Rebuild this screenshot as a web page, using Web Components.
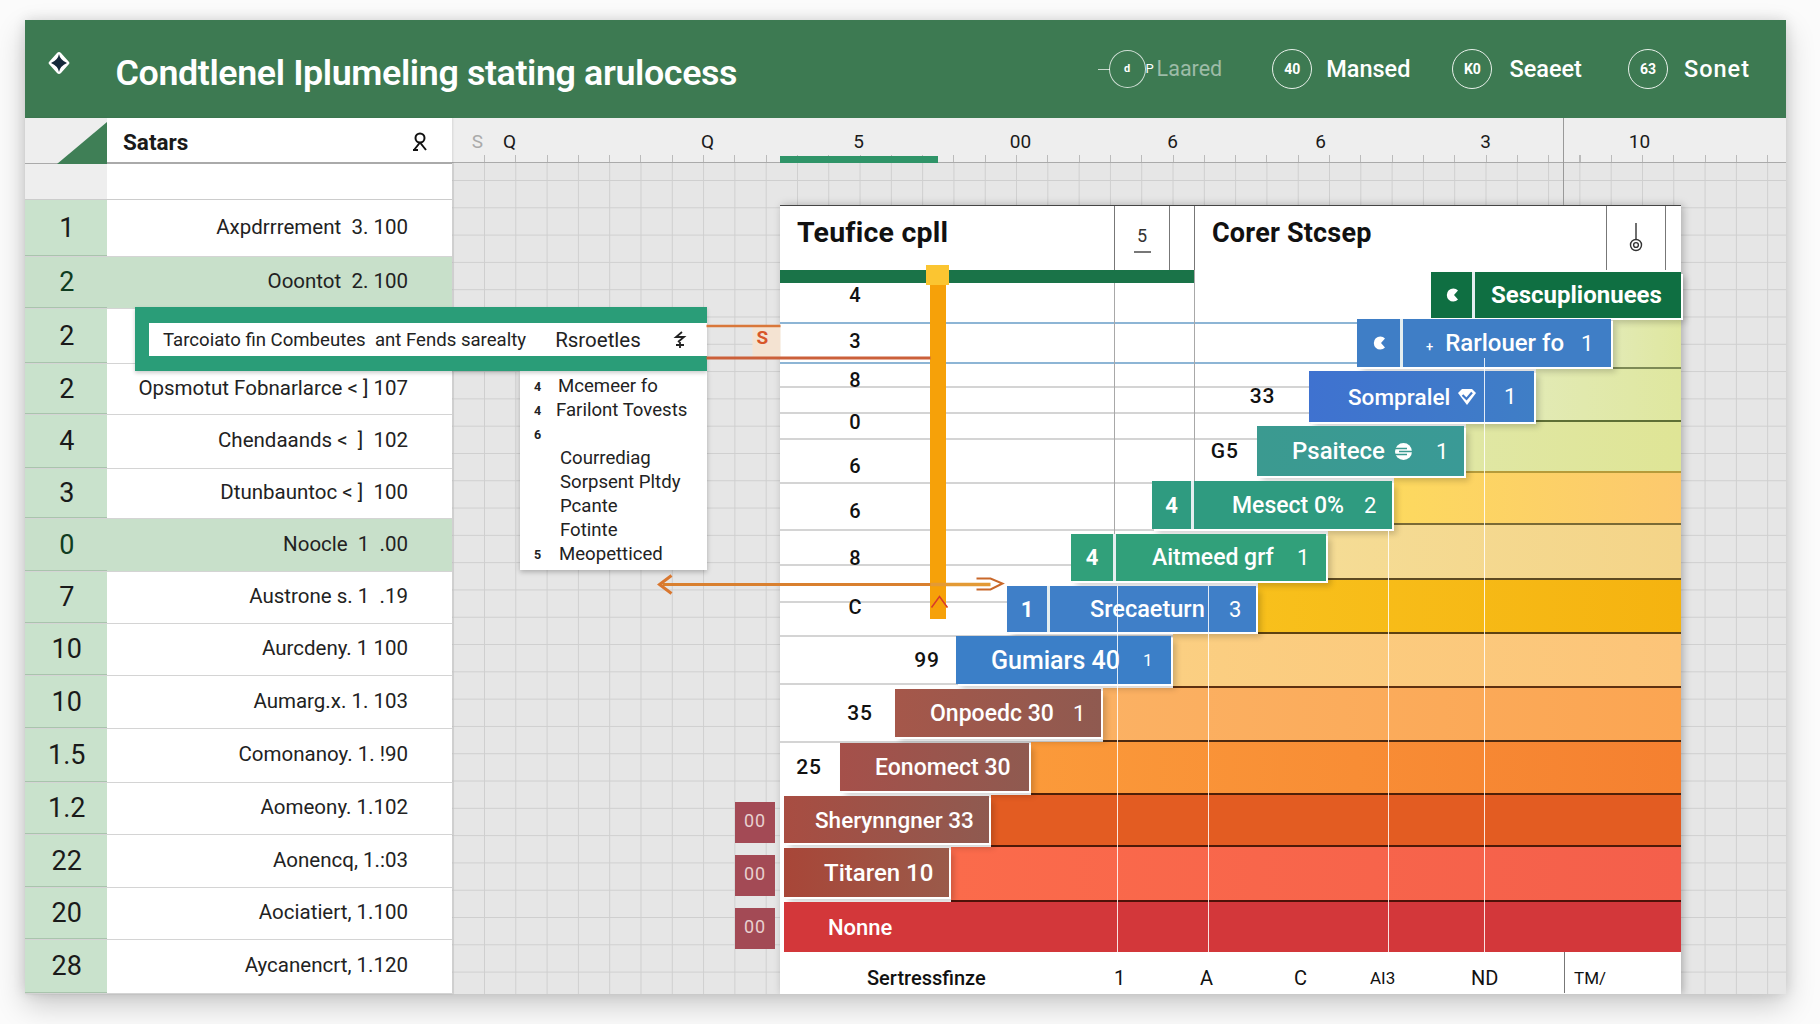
<!DOCTYPE html>
<html>
<head>
<meta charset="utf-8">
<style>
  html, body { margin: 0; height: 100%; background: #fbfbfb; }
  body { font-family: Roboto, "Liberation Sans", sans-serif; color: #1a1a1a; overflow: hidden; }
</style>
</head>
<body>
<app-window>
  <app-header slot="header"></app-header>
  <name-table slot="table"></name-table>
  <chart-area slot="chart"></chart-area>
  <filter-popup slot="over"></filter-popup>
</app-window>

<script>
(() => {
  const PANEL_X = 780;

  const ROWS = [
    [57, '1', 'Axpdrrrement&nbsp; 3. 100'],
    [52, '2', 'Ooontot&nbsp; 2. 100', true],
    [55, '2', ''],
    [51, '2', 'Opsmotut Fobnarlarce &lt; ] 107'],
    [54, '4', 'Chendaands &lt;&nbsp; ]&nbsp; 102'],
    [50, '3', 'Dtunbauntoc &lt; ]&nbsp; 100'],
    [53, '0', 'Noocle&nbsp; 1&nbsp; .00', true],
    [52, '7', 'Austrone s. 1&nbsp; .19'],
    [52, '10', 'Aurcdeny. 1 100'],
    [53, '10', 'Aumarg.x. 1. 103'],
    [54, '1.5', 'Comonanoy. 1. !90'],
    [52, '1.2', 'Aomeony. 1.102'],
    [53, '22', 'Aonencq, 1.:03'],
    [52, '20', 'Aociatiert, 1.100'],
    [54, '28', 'Aycanencrt, 1.120'],
  ];

  const notch = (c) => `<svg width="14" height="14" viewBox="0 0 14 14"><path d="M13 2.5 A6.5 6.5 0 1 0 13 11.5 L9 7 Z" fill="#fff" stroke="${c}" stroke-width="0"/></svg>`;
  const SHIELD = `<svg width="20" height="20" viewBox="0 0 20 20"><path d="M1 6 L5 2 H15 L19 6 L10 18 Z" fill="#fff"/><path d="M5.5 8 L9.5 12 L15 5.5" fill="none" stroke="#3f78c8" stroke-width="2.2"/></svg>`;
  const COIN = `<svg width="19" height="19" viewBox="0 0 19 19"><circle cx="9.5" cy="9.5" r="8.5" fill="#fff"/><path d="M1 6.5 H13 M5 9.5 H18 M1 12.5 H13" stroke="#3a9a90" stroke-width="1.4"/></svg>`;

  // y0/h: band box, top/bh: bar box, all in page pixels
  const BANDS = [
    { y0: 272, h: 45.5, x0: 1431, x1: 1681, top: 272, bh: 45.5, split: 1475, cell: notch('#0f6f42'), bg: '#0f6f42', textX: 1491, text: 'Sescuplionuees', weight: 700, size: 24 },
    { y0: 317.5, h: 51.5, x0: 1357, x1: 1611, top: 319, bh: 48, split: 1403, cell: notch('#3f7ec6'), bg: '#3f7ec6', textX: 1426, text: '<small>+</small>&nbsp; Rarlouer fo', numX: 1581, num: '1', size: 24, fill: 'linear-gradient(90deg,#e2eab4,#dfe79f)', rule: '#7d8a55' },
    { y0: 369, h: 53, x0: 1308.5, x1: 1534, top: 371, bh: 51, bg: 'linear-gradient(90deg,#3f72d0,#3f7ec6)', textX: 1348, text: 'Somprаlel', size: 22.5, icon: SHIELD, iconGap: 7, numX: 1504, num: '1', label: '33', labelGap: 33, fill: 'linear-gradient(90deg,#e2eab4,#dfe79f)', rule: '#5e6f35' },
    { y0: 422, h: 51, x0: 1257, x1: 1464, top: 426, bh: 50, bg: 'linear-gradient(90deg,#3b9a90,#3a9a96)', textX: 1292, text: 'Psaitece', size: 24, icon: COIN, iconGap: 9, numX: 1436, num: '1', label: 'G5', labelGap: 18, fill: 'linear-gradient(90deg,#e0e7a4,#dfe596)', rule: '#b59b3a' },
    { y0: 473, h: 52, x0: 1152, x1: 1392, top: 481, bh: 48, split: 1194, cell: '4', bg: '#2f9b80', textX: 1232, text: 'Mesect 0%', size: 23, numX: 1364, num: '2', fill: 'linear-gradient(90deg,#fdd95f,#fcc96e)', rule: '#7a6a35' },
    { y0: 525, h: 55, x0: 1071, x1: 1326, top: 534, bh: 47, split: 1116, cell: '4', bg: '#31a07a', textX: 1152, text: 'Aitmeed grf', size: 23, numX: 1297, num: '1', fill: 'linear-gradient(90deg,#f5dc95,#f4d488)', rule: '#5e4a20' },
    { y0: 580, h: 54, x0: 1007, x1: 1256, top: 586, bh: 46, split: 1050, cell: '1', bg: '#3f7fc8', textX: 1090, text: 'Srecaeturn', size: 23.5, numX: 1229, num: '3', fill: 'linear-gradient(90deg,#f8c01c,#f5b310)', rule: '#5e4210' },
    { y0: 634, h: 54, x0: 956, x1: 1171, top: 636, bh: 48, bg: '#3b7fc8', textX: 991, text: 'Gumiars 40', size: 25, numX: 1143, num: '1', label: '99', labelGap: 16, fill: 'linear-gradient(90deg,#fbcf82,#fcc478)', rule: '#5e3010', small: true },
    { y0: 688, h: 54, x0: 895, x1: 1101, top: 689, bh: 48, bg: 'linear-gradient(90deg,#a5574a,#8f5a50)', textX: 930, text: 'Onpoedc 30', size: 23, numX: 1073, num: '1', label: '35', labelGap: 22, fill: 'linear-gradient(90deg,#fbb163,#fba552)', rule: '#4e2a10' },
    { y0: 742, h: 53, x0: 840, x1: 1029, top: 743, bh: 48, bg: 'linear-gradient(90deg,#a5504a,#8f5a50)', textX: 875, text: 'Eonomect 30', size: 23, label: '25', labelGap: 18, fill: 'linear-gradient(90deg,#fb9a3a,#f58030)', rule: '#4e2008' },
    { y0: 795, h: 52, x0: 784, x1: 989, top: 796, bh: 47, bg: 'linear-gradient(90deg,#a84d42,#8f5a50)', textX: 815, text: 'Sherynngner 33', size: 22.5, fill: '#e35c22', rule: '#4e1a08' },
    { y0: 847, h: 55, x0: 784, x1: 949, top: 848, bh: 49, bg: 'linear-gradient(90deg,#a84638,#9a5a4a)', textX: 824, text: 'Titaren 10', size: 24, fill: 'linear-gradient(90deg,#fb6b4b,#f45f4b)', rule: '#4e1208' },
    { y0: 902, h: 50, x0: 784, x1: 1681, top: 902, bh: 50, bg: '#d3373a', textX: 828, text: 'Nonne', size: 22, flat: true },
  ];

  // horizontal rules behind the bars: [y, colour, thickness]
  const RULES = [
    [322, '#8db5d5', 2], [362, '#8db5d5', 2], [386, '#d4d4d4', 1.5], [412, '#d4d4d4', 1.5], [438, '#d4d4d4', 1.5],
    [482, '#d4d4d4', 1.5], [529, '#d4d4d4', 1.5], [564, '#d4d4d4', 1.5], [601, '#d4d4d4', 1.5], [635, '#d4d4d4', 1.5],
    [683, '#d4d4d4', 1.5], [741, '#d4d4d4', 1.5],
  ];
  const NUMBERS = [[46, '4'], [46, '3'], [32, '8'], [52, '0'], [36, '6'], [54, '6'], [40, '8'], [58, 'C']];
  // white lines over the bars: [x, y from, y to]
  const WHITE_LINES = [[1117, 586, 952], [1208, 586, 952], [1388, 529, 958], [1484, 358, 952]];

  class AppWindow extends HTMLElement {
    constructor() {
      super();
      this.attachShadow({ mode: 'open' });
      this.shadowRoot.innerHTML = `
        <style>
          :host {
            display: block; position: relative; box-sizing: border-box;
            width: 1761.5px; height: 973.5px; margin: 19.5px 0 0 24.5px;
            background: #e6e6e6; box-shadow: 0 12px 28px rgba(0,0,0,.2), 0 0 12px rgba(0,0,0,.12);
          }
          .main { display: grid; grid-template-columns: 427.5px 1fr; height: 875.5px; }
          svg { position: absolute; inset: 0; width: 100%; height: 100%; pointer-events: none; z-index: 10; }
          text { font: 700 19px Roboto, sans-serif; fill: #d8562a; }
        </style>
        <slot name="header"></slot>
        <div class="main">
          <slot name="table"></slot>
          <slot name="chart"></slot>
        </div>
        <slot name="over"></slot>
        <svg viewBox="24.5 19.5 1761.5 973.5">
          <rect x="752" y="325" width="28" height="32" fill="#f4e3d2"/>
          <path d="M706 325.5 H780" stroke="#d9773a" stroke-width="2.5"/>
          <path d="M706 357.5 H930" stroke="#cb603a" stroke-width="3"/>
          <text x="756" y="343">S</text>
          <path d="M662 584 H930" stroke="#d9802f" stroke-width="3"/>
          <path d="M930 584 H990" stroke="#e39a35" stroke-width="3.5"/>
          <path d="M671 575 L659 584 L671 593" fill="none" stroke="#d9772f" stroke-width="3"/>
          <path d="M976 578 H990 L1002 583 L990 589 H976" fill="none" stroke="#c9682a" stroke-width="2"/>
          <path d="M931 607 L939 596 L947 607" fill="#f6a009" stroke="#d83a2a" stroke-width="1.5"/>
        </svg>
      `;
    }
  }

  class AppHeader extends HTMLElement {
    constructor() {
      super();
      this.attachShadow({ mode: 'open' });
      this.shadowRoot.innerHTML = `
        <style>
          :host {
            display: flex; align-items: center; box-sizing: border-box; height: 98px;
            padding: 0 36px 0 22px; background: #3d7a52; color: #fff;
          }
          .logo { flex: none; margin-top: -12px; }
          h1 { margin: 0 0 0 45px; font: 600 35.8px Roboto, sans-serif; letter-spacing: -.38px; white-space: nowrap; position: relative; top: 4px; }
          .items { display: flex; align-items: center; margin-left: auto; }
          .item { display: flex; align-items: center; font: 500 23.5px Roboto, sans-serif; position: relative; }
          .ring {
            display: grid; place-items: center; box-sizing: border-box; width: 40px; height: 40px;
            border: 1.5px solid #e8f0ea; border-radius: 50%; font: 700 14px Roboto, sans-serif;
          }
          .dim { font-weight: 400; font-size: 21.5px; color: rgba(255,255,255,.5); }
          .dim .ring { width: 37px; height: 38px; border-color: rgba(255,255,255,.75); color: #fff; font-size: 11px; }
          .dim::before { content: ''; position: absolute; left: -11px; top: 50%; width: 12px; height: 1.5px; background: rgba(255,255,255,.7); }
          .pin { width: 11px; color: #fff; font-size: 13px; }
        </style>
        <svg class="logo" width="24" height="24" viewBox="0 0 24 24">
          <path d="M12 1 Q13 1 14 2 L22 11 Q23 12 22 13 L14 22 Q13 23 12 23 Q11 23 10 22 L2 13 Q1 12 2 11 L10 2 Q11 1 12 1 Z" fill="#fff"/>
          <path d="M12 3 Q13 9 20 12 Q13 15 12 21 Q11 15 4 12 Q11 9 12 3 Z" fill="#15283a"/>
        </svg>
        <h1>Condtlenel Iplumeling stating arulocess</h1>
        <div class="items">
          <div class="item dim"><span class="ring">d</span><span class="pin">P</span>Laared</div>
          <div class="item" style="margin-left:50px"><span class="ring" style="margin-right:14px">40</span>Mansed</div>
          <div class="item" style="margin-left:42px"><span class="ring" style="margin-right:17px">K0</span>Seaeet</div>
          <div class="item" style="margin-left:46px"><span class="ring" style="margin-right:16px">63</span><span style="letter-spacing:1px">Sonet</span></div>
        </div>
      `;
    }
  }

  class NameTable extends HTMLElement {
    constructor() {
      super();
      this.attachShadow({ mode: 'open' });
      const rows = ROWS.map(([h, num, name, hl]) => `
        <div class="row ${hl ? 'hl' : ''}" style="height:${h}px">
          <span class="num">${num}</span>
          <span class="name">${name}</span>
        </div>`).join('');
      this.shadowRoot.innerHTML = `
        <style>
          :host { display: block; background: #fff; box-shadow: 1px 0 2px rgba(0,0,0,.1); position: relative; z-index: 1; }
          .head { display: grid; grid-template-columns: 82.5px 1fr; height: 46px; background: #eee; }
          .corner { position: relative; border-bottom: 1.5px solid #aaa; box-sizing: border-box; }
          .corner::after { content: ''; position: absolute; right: 0; bottom: -1.5px; width: 50px; height: 42px; background: #3f7f56; clip-path: polygon(100% 0, 100% 100%, 0 100%); }
          .title {
            display: flex; align-items: center; justify-content: space-between; box-sizing: border-box;
            padding: 4px 22px 0 16px; background: #fff; border-bottom: 2px solid #aaa; font: 700 22.5px Roboto, sans-serif;
          }
          .blank { display: grid; grid-template-columns: 82.5px 1fr; height: 36px; }
          .blank i { background: #eee; border-bottom: 1.5px solid #ccc; }
          .blank b { border-bottom: 1.5px solid #ccc; }
          .row { display: grid; grid-template-columns: 82.5px 1fr; align-items: center; box-sizing: border-box; border-bottom: 1.5px solid #d4d4d4; }
          .num { display: grid; place-items: center; height: 100%; background: #c9e2cc; font-size: 27px; border-bottom: 1px solid #a9c4ad; margin-bottom: -1px; padding-left: 2px; box-sizing: border-box; }
          .name { text-align: right; padding-right: 44px; font-size: 20.5px; white-space: nowrap; color: #222; position: relative; top: -1px; }
          .hl { background: #c8e0ca; color: #0f3d20; }
          .hl .num { background: #c8e0ca; }
        </style>
        <div class="head">
          <div class="corner"></div>
          <div class="title">Satars
            <svg width="20" height="20" viewBox="0 0 20 20" fill="none" stroke="#111" stroke-width="2"><circle cx="10" cy="6" r="4.5"/><path d="M10 10.5 L4 18 M10 10.5 L16 18 M3 18 H8"/></svg>
          </div>
        </div>
        <div class="blank"><i></i><b></b></div>
        ${rows}
      `;
    }
  }

  class ChartArea extends HTMLElement {
    constructor() {
      super();
      this.attachShadow({ mode: 'open' });
      const labels = [['S', 10.5, '#aaa'], ['Q', 2], ['Q', 168], ['5', 121], ['00', 132], ['6', 122], ['6', 118], ['3', 135], ['10', 124]];
      this.shadowRoot.innerHTML = `
        <style>
          :host { display: flex; flex-direction: column; position: relative; overflow: hidden; min-height: 0; }
          .ruler {
            display: flex; align-items: center; box-sizing: border-box; height: 45px; flex: none; padding-top: 4px; position: relative;
            background:
              repeating-linear-gradient(90deg, #bbb 0 1px, transparent 1px 31.3px) 32px bottom / 100% 7px no-repeat,
              #eee;
            border-bottom: 1.5px solid #aaa; font-size: 19px;
          }
          .ruler span { flex: none; width: 30px; text-align: center; }
          .tab { position: absolute; left: 328px; bottom: -1.5px; width: 158px; height: 7px; background: #2f9468; }
          .vline { position: absolute; left: 1111px; top: 0; height: 87px; width: 1px; background: #999; z-index: 1; }
          .grid {
            flex: 1; min-height: 0;
            background:
              linear-gradient(90deg, #cfcfcf 1.2px, transparent 1.2px) 32px 17px / 31.3px 27.3px,
              linear-gradient(#cfcfcf 1.2px, transparent 1.2px) 32px 17px / 31.3px 27.3px,
              #e6e6e6;
            padding: 42px 0 0 328px;
          }
          .chips { position: absolute; left: 283px; top: 684px; display: flex; flex-direction: column; gap: 12px; }
          .chip { display: grid; place-items: center; width: 40px; height: 41px; background: #a34a55; color: #e8d0d0; font-size: 18px; letter-spacing: 1px; padding-bottom: 4px; box-sizing: border-box; }
        </style>
        <div class="ruler">
          ${labels.map(([t, m, c]) => `<span style="margin-left:${m}px${c ? ';color:' + c : ''}">${t}</span>`).join('')}
          <div class="tab"></div>
        </div>
        <div class="vline"></div>
        <div class="grid"><chart-panel></chart-panel></div>
        <div class="chips"><div class="chip">00</div><div class="chip">00</div><div class="chip">00</div></div>
      `;
    }
  }

  class ChartPanel extends HTMLElement {
    constructor() {
      super();
      this.attachShadow({ mode: 'open' });
      const bands = BANDS.map((b, i) => `<step-band data-i="${i}"></step-band>`).join('');
      this.shadowRoot.innerHTML = `
        <style>
          :host {
            display: block; position: relative; box-sizing: border-box; width: 901px; height: 789px;
            background: #fff; border-top: 1.5px solid #444; box-shadow: 2px 0 8px rgba(0,0,0,.25);
            color: #111;
          }
          .head { display: grid; grid-template-columns: 334px 55px 25px 412px 59px 16px; height: 64.5px; }
          .head > div { display: flex; align-items: center; box-sizing: border-box; position: relative; }
          .head .b { border-left: 1px solid #777; }
          h2 { margin: 0; font: 700 27px Roboto, sans-serif; padding: 0 0 0 17px; letter-spacing: .2px; white-space: nowrap; position: relative; top: -5px; }
          .five { justify-content: center; font-size: 18px; flex-direction: column; padding-top: 2px; color: #333; }
          .five i { width: 17px; height: 1.5px; background: #777; margin-top: 5px; }
          .greenbar { position: absolute; left: 0; top: 64.5px; width: 414px; height: 13px; background: #1a7348; }
          .under { position: absolute; inset: 0; overflow: hidden; }
          .rule { position: absolute; left: 0; width: 580px; }
          .gray { position: absolute; width: 1px; background: #a8a8a8; }
          .nums { position: absolute; left: 0; top: 66.5px; width: 150px; display: flex; flex-direction: column; }
          .nums span { display: grid; place-items: center; font: 500 20px Roboto, sans-serif; }
          .stack { position: relative; padding-top: 2px; display: flex; flex-direction: column; }
          .orange { position: absolute; left: 150px; top: 78px; width: 16px; height: 335px; background: #f6a109; z-index: 3; }
          .cap { position: absolute; left: 146px; top: 59px; width: 23px; height: 20px; background: #fbc531; z-index: 4; }
          .white { position: absolute; width: 1px; background: rgba(255,255,255,.85); z-index: 5; }
          .foot { position: relative; height: 41px; box-sizing: border-box; font-size: 20px; background: #fff; }
          .foot span { position: absolute; top: 14px; }
        </style>
        <div class="under">
          ${RULES.map(([y, c, t]) => `<div class="rule" style="top:${y - 205.5}px;height:${t}px;background:${c}"></div>`).join('')}
          <div class="gray" style="left:334px;top:0;height:330px"></div>
          <div class="gray" style="left:414px;top:0;height:276px"></div>
        </div>
        <div class="nums">
          ${NUMBERS.map(([h, t]) => `<span style="height:${h}px">${t}</span>`).join('')}
        </div>
        <div class="head" style="position:relative">
          <div><h2 style="font-size:28.5px">Teufice cpll</h2></div>
          <div class="b five"><span>5</span><i></i></div>
          <div class="b"></div>
          <div class="b"><h2>Corer Stcsep</h2></div>
          <div class="b" style="justify-content:center">
            <svg width="14" height="30" viewBox="0 0 14 30" fill="none" stroke="#333" stroke-width="1.4"><path d="M7 0 V16"/><circle cx="7" cy="22" r="5.5"/><circle cx="7" cy="22" r="2.4"/></svg>
          </div>
          <div class="b"></div>
        </div>
        <div class="greenbar"></div>
        <div class="stack">${bands}</div>
        <div class="foot">
          <span style="left:87px;font-weight:500">Sertressfinze</span>
          <span style="left:334px">1</span>
          <span style="left:420px">A</span>
          <span style="left:514px">C</span>
          <span style="left:590px;font-size:17px;top:16px">AI3</span>
          <span style="left:691px">ND</span>
          <span style="left:784px;border-left:1px solid #777;height:41px;top:0"></span>
          <span style="left:794px;font-size:17px;top:16px">TM/</span>
        </div>
        <div class="orange"></div>
        <div class="cap"></div>
        ${WHITE_LINES.map(([x, a, b]) => `<div class="white" style="left:${x - PANEL_X}px;top:${a - 205.5}px;height:${b - a}px"></div>`).join('')}
      `;
    }
  }

  class StepBand extends HTMLElement {
    connectedCallback() {
      if (this.shadowRoot) return;
      const b = BANDS[+this.dataset.i];
      const hasSplit = b.split != null;
      const mainStart = hasSplit ? b.split : b.x0;
      this.attachShadow({ mode: 'open' });
      this.shadowRoot.innerHTML = `
        <style>
          :host { display: flex; height: ${b.h}px; position: relative; flex: none; }
          .spacer { flex: none; width: ${b.x0 - PANEL_X}px; box-sizing: border-box; text-align: right; }
          .label { display: block; padding-right: ${b.labelGap || 0}px; margin-top: ${b.top - b.y0}px; font: 500 21px/${b.bh}px Roboto, sans-serif; color: #111; letter-spacing: 1px; }
          .bar {
            flex: none; display: flex; position: relative; z-index: 2; box-sizing: border-box;
            width: ${b.x1 - b.x0}px; height: ${b.bh}px; margin-top: ${b.top - b.y0}px;
            background: ${b.bg}; color: #fff; font: ${b.weight || 500} ${b.size || 21}px Roboto, sans-serif; white-space: nowrap;
            ${b.flat ? '' : 'box-shadow: 2px 2px 0 #fff, 5px 5px 6px rgba(0,0,0,.18);'}
          }
          .cell { flex: none; display: grid; place-items: center; box-sizing: border-box; width: ${mainStart - b.x0}px; border-right: 3px solid #e4eef0; font-weight: 700; font-size: 22px; }
          .main { flex: 1; min-width: 0; position: relative; display: flex; align-items: center; padding-left: ${b.textX - mainStart}px; }
          .main small { font-size: 13px; }
          .main svg { margin-left: ${b.iconGap || 0}px; flex: none; }
          .end { position: absolute; left: ${(b.numX || 0) - mainStart}px; font-weight: 400; font-size: ${b.small ? 17 : 22}px; }
          .fill { flex: 1; box-sizing: border-box; background: ${b.fill || 'none'}; ${b.rule ? `border-bottom: 2px solid ${b.rule};` : ''} margin-left: 2px; }
        </style>
        <div class="spacer">${b.label ? `<span class="label">${b.label}</span>` : ''}</div>
        <div class="bar">
          ${hasSplit ? `<div class="cell">${b.cell}</div>` : ''}
          <div class="main">
            <span>${b.text}</span>${b.icon || ''}
            ${b.num ? `<span class="end">${b.num}</span>` : ''}
          </div>
        </div>
        ${b.fill ? '<div class="fill"></div>' : ''}
      `;
    }
  }

  class FilterPopup extends HTMLElement {
    constructor() {
      super();
      this.attachShadow({ mode: 'open' });
      const items = [['4', 'Mcemeer fo', 23], ['4', 'Farilont Tovests', 21], ['6', '', 21], ['', 'Courrediag', 25], ['', 'Sorpsent Pltdy', 25], ['', 'Pcante', 25], ['', 'Fotinte', 25], ['5', 'Meopetticed', 24]];
      this.shadowRoot.innerHTML = `
        <style>
          :host { position: absolute; left: 110.5px; top: 287.5px; width: 571.5px; display: block; z-index: 6; font-size: 18.6px; color: #222; }
          .bar { box-sizing: border-box; height: 64px; padding: 16px 0 15px 14px; background: #2a9d78; box-shadow: 0 2px 4px rgba(0,0,0,.2); position: relative; z-index: 1; }
          .inner { display: flex; align-items: center; height: 100%; padding-left: 14px; background: #fff; white-space: nowrap; }
          .inner b { font-weight: 400; font-size: 20.5px; margin-left: 29px; }
          .inner svg { margin-left: 32px; }
          .menu { margin-left: 385px; box-sizing: border-box; height: 199px; padding-top: 3px; background: #fff; box-shadow: 0 2px 5px rgba(0,0,0,.25); }
          .menu div { display: flex; align-items: center; height: 24px; white-space: nowrap; }
          .menu i { flex: none; width: 18px; padding-left: 14px; font: 700 12.5px Roboto, sans-serif; }
        </style>
        <div class="bar">
          <div class="inner">
            <span>Tarcoiato fin Combeutes&nbsp; ant Fends sarealty</span>
            <b>Rsroetles</b>
            <svg width="14" height="18" viewBox="0 0 14 18" fill="none" stroke="#222" stroke-width="1.8"><path d="M9 1 L3 6 H11 L5 11 M7 11 V17 M3 14 H11"/></svg>
          </div>
        </div>
        <div class="menu">
          ${items.map(([n, t, pad]) => `<div><i>${n}</i><span style="margin-left:${pad - 18 + 1}px">${t}</span></div>`).join('')}
        </div>
      `;
    }
  }

  customElements.define('app-header', AppHeader);
  customElements.define('name-table', NameTable);
  customElements.define('step-band', StepBand);
  customElements.define('chart-panel', ChartPanel);
  customElements.define('chart-area', ChartArea);
  customElements.define('filter-popup', FilterPopup);
  customElements.define('app-window', AppWindow);
})();
</script>
</body>
</html>
